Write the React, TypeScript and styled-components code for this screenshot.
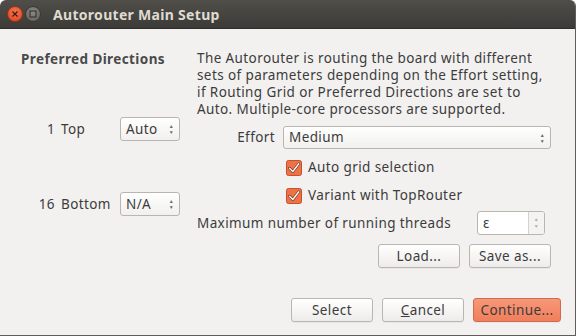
import React from 'react';
import styled, { createGlobalStyle } from 'styled-components';

const GlobalStyle = createGlobalStyle`
  html, body {
    margin: 0;
    padding: 0;
    background: #ffffff;
  }
  body {
    font-family: 'Noto Sans', 'Open Sans', sans-serif;
  }
`;

const Window = styled.div`
  width: 576px;
  height: 336px;
  display: flex;
  flex-direction: column;
  background: #f2f1f0;
  color: #3c3c3c;
  font-size: 13.5px;
  letter-spacing: 0.4px;
  line-height: 17px;
  box-sizing: border-box;
  border-right: 1px solid #5f5e5a;
  border-bottom: 1px solid #5f5e5a;
  border-radius: 6px 6px 0 0;
  overflow: hidden;
`;

const TitleBar = styled.div`
  height: 29px;
  flex: none;
  display: flex;
  align-items: center;
  padding-left: 7px;
  gap: 2px;
  background: linear-gradient(#4f4e49, #3c3b37);
  border-bottom: 1px solid #2f2e2b;
  box-sizing: border-box;
`;

const WinButton = styled.div<{ $close?: boolean }>`
  width: 16px;
  height: 16px;
  border-radius: 50%;
  display: flex;
  align-items: center;
  justify-content: center;
  background: ${(p) =>
    p.$close
      ? 'radial-gradient(circle at 50% 35%, #f7744f, #d8451e)'
      : 'radial-gradient(circle at 50% 35%, #8a8984, #5f5e59)'};
  border: 1px solid ${(p) => (p.$close ? '#9e3216' : '#3a3936')};
  box-sizing: border-box;
`;

const Title = styled.div`
  margin-left: 10px;
  font-weight: 700;
  font-size: 14px;
  letter-spacing: 0.3px;
  color: #dfdbd2;
`;

const Body = styled.div`
  flex: 1;
  display: flex;
`;

const LeftCol = styled.div`
  width: 197px;
  flex: none;
  padding-top: 22px;
  box-sizing: border-box;
`;

const GroupTitle = styled.div`
  font-weight: 700;
  padding-left: 21px;
  color: #4a4a4a;
  white-space: nowrap;
`;

const DirRow = styled.div<{ $top: number }>`
  display: grid;
  grid-template-columns: 55px 65px 60px;
  align-items: center;
  margin-top: ${(p) => p.$top}px;
`;

const LayerNum = styled.span`
  text-align: right;
`;

const LayerName = styled.span`
  padding-left: 6px;
`;

const SpinSelect = styled.div`
  height: 24px;
  display: flex;
  align-items: center;
  justify-content: space-between;
  padding: 0 5px 0 5px;
  border: 1px solid #b9b6b0;
  border-radius: 3px;
  background: linear-gradient(#ffffff, #f1f0ee);
  box-sizing: border-box;
`;

const Arrows = styled.span`
  display: flex;
  flex-direction: column;
  font-size: 5px;
  line-height: 6px;
  color: #6a6a6a;
`;

const RightCol = styled.div`
  flex: 1;
  padding: 21px 24px 0 0;
  display: flex;
  flex-direction: column;
`;

const Para = styled.div`
  white-space: nowrap;
`;

const EffortRow = styled.div`
  display: grid;
  grid-template-columns: 78px 1fr;
  column-gap: 8px;
  align-items: center;
  margin-top: 8px;
`;

const FieldLabel = styled.span`
  text-align: right;
`;

const Combo = styled(SpinSelect)`
  height: 23px;
`;

const CheckRow = styled.label<{ $top: number }>`
  display: flex;
  align-items: center;
  gap: 6px;
  padding-left: 89px;
  margin-top: ${(p) => p.$top}px;
  height: 17px;
`;

const ThreadsRow = styled.div`
  display: flex;
  align-items: center;
  justify-content: space-between;
  margin-top: 7px;
  padding-right: 6px;
`;

const NumberBox = styled.div`
  width: 68px;
  height: 24px;
  display: flex;
  border: 1px solid #b9b6b0;
  border-radius: 3px;
  background: #ffffff;
  box-sizing: border-box;
  overflow: hidden;
`;

const NumberText = styled.span`
  flex: 1;
  padding-left: 5px;
  display: flex;
  align-items: center;
`;

const NumberArrows = styled.div`
  width: 15px;
  border-left: 1px solid #d4d2ce;
  background: #f4f3f2;
  display: flex;
  flex-direction: column;
  align-items: center;
  justify-content: center;
  font-size: 5px;
  line-height: 7px;
  color: #b0aeaa;
`;

const ButtonRow = styled.div<{ $top: number; $right: number }>`
  display: flex;
  justify-content: flex-end;
  gap: 9px;
  margin-top: ${(p) => p.$top}px;
  padding-right: ${(p) => p.$right}px;
`;

const Button = styled.button<{ $primary?: boolean; $w?: number }>`
  width: ${(p) => p.$w ?? 82}px;
  height: 24px;
  font-family: inherit;
  font-size: inherit;
  letter-spacing: inherit;
  color: #3c3c3c;
  padding: 0;
  border-radius: 3px;
  border: 1px solid ${(p) => (p.$primary ? '#d26a4e' : '#b9b6b0')};
  background: ${(p) =>
    p.$primary
      ? 'linear-gradient(#f79878, #f07e5c)'
      : 'linear-gradient(#ffffff, #eeecea)'};
  box-shadow: 0 1px 0 rgba(0, 0, 0, 0.04);
`;

const Footer = styled.div`
  flex: none;
  height: 38px;
  padding-top: 1px;
  box-sizing: border-box;
`;

const Underline = styled.span`
  text-decoration: underline;
`;

function CheckIcon() {
  return (
    <svg width="16" height="16" viewBox="0 0 16 16">
      <rect x="0.5" y="0.5" width="15" height="15" rx="2" fill="#ef7145" stroke="#c2522b" />
      <path d="M3.5 8.2 L6.8 11.5 L12.8 3.8" fill="none" stroke="#5a2a16" strokeWidth="2.6" strokeLinecap="round" strokeLinejoin="round" />
      <path d="M3.5 8.2 L6.8 11.5 L12.8 3.8" fill="none" stroke="#ffffff" strokeWidth="1.4" strokeLinecap="round" strokeLinejoin="round" />
    </svg>
  );
}

export default function App() {
  return (
    <>
      <GlobalStyle />
      <Window>
        <TitleBar>
          <WinButton $close>
            <svg width="6" height="6" viewBox="0 0 6 6">
              <path d="M0.5 0.5 L5.5 5.5 M5.5 0.5 L0.5 5.5" stroke="#3a1a10" strokeWidth="1.2" />
            </svg>
          </WinButton>
          <WinButton>
            <svg width="8" height="8" viewBox="0 0 8 8">
              <rect x="1" y="1" width="6" height="6" fill="none" stroke="#3a3936" strokeWidth="1.2" />
            </svg>
          </WinButton>
          <Title>Autorouter Main Setup</Title>
        </TitleBar>
        <Body>
          <LeftCol>
            <GroupTitle>Preferred Directions</GroupTitle>
            <DirRow $top={49}>
              <LayerNum>1</LayerNum>
              <LayerName>Top</LayerName>
              <SpinSelect>
                Auto
                <Arrows>
                  <span>▲</span>
                  <span>▼</span>
                </Arrows>
              </SpinSelect>
            </DirRow>
            <DirRow $top={51}>
              <LayerNum>16</LayerNum>
              <LayerName>Bottom</LayerName>
              <SpinSelect>
                N/A
                <Arrows>
                  <span>▲</span>
                  <span>▼</span>
                </Arrows>
              </SpinSelect>
            </DirRow>
          </LeftCol>
          <RightCol>
            <Para>
              The Autorouter is routing the board with different
              <br />
              sets of parameters depending on the Effort setting,
              <br />
              if Routing Grid or Preferred Directions are set to
              <br />
              Auto. Multiple-core processors are supported.
            </Para>
            <EffortRow>
              <FieldLabel>Effort</FieldLabel>
              <Combo>
                Medium
                <Arrows>
                  <span>▲</span>
                  <span>▼</span>
                </Arrows>
              </Combo>
            </EffortRow>
            <CheckRow $top={10}>
              <CheckIcon />
              Auto grid selection
            </CheckRow>
            <CheckRow $top={11}>
              <CheckIcon />
              Variant with TopRouter
            </CheckRow>
            <ThreadsRow>
              <span>Maximum number of running threads</span>
              <NumberBox>
                <NumberText>ε</NumberText>
                <NumberArrows>
                  <span>▲</span>
                  <span>▼</span>
                </NumberArrows>
              </NumberBox>
            </ThreadsRow>
            <ButtonRow $top={9} $right={0}>
              <Button>Load...</Button>
              <Button>Save as...</Button>
            </ButtonRow>
          </RightCol>
        </Body>
        <Footer>
          <ButtonRow $top={0} $right={14}>
            <Button>Select</Button>
            <Button>
              <Underline>C</Underline>ancel
            </Button>
            <Button $primary $w={88}>
              Continue...
            </Button>
          </ButtonRow>
        </Footer>
      </Window>
    </>
  );
}
